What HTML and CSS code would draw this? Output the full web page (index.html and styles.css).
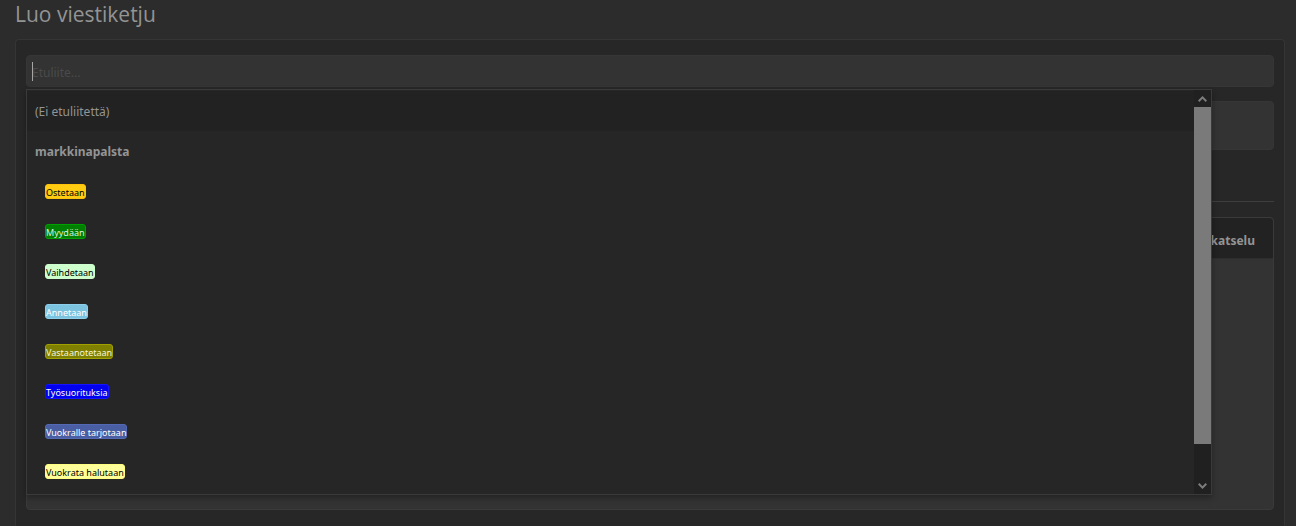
FILE: index.html
```html
<!DOCTYPE html>
<html lang="fi">
<head>
    <meta charset="UTF-8">
    <meta name="viewport" content="width=device-width, initial-scale=1.0">
    <title>Luo viestiketju</title>
    <link rel="stylesheet" href="styles.css">
</head>
<body>
    <h1>Luo viestiketju</h1>

    <form class="block">
        <div class="prefix">
            <input type="text" class="input" id="etuliite" placeholder="Etuliite..." aria-label="Etuliite">
            <span class="caret"></span>

            <!-- Etuliitevalikko -->
            <div class="dropdown">
                <ul class="options" role="listbox" aria-label="Etuliite">
                    <li class="option active" role="option">(Ei etuliitettä)</li>
                    <li class="option group">markkinapalsta</li>
                    <li class="option nested" role="option"><span class="label ostetaan">Ostetaan</span></li>
                    <li class="option nested" role="option"><span class="label myydaan">Myydään</span></li>
                    <li class="option nested" role="option"><span class="label vaihdetaan">Vaihdetaan</span></li>
                    <li class="option nested" role="option"><span class="label annetaan">Annetaan</span></li>
                    <li class="option nested" role="option"><span class="label vastaanotetaan">Vastaanotetaan</span></li>
                    <li class="option nested" role="option"><span class="label tyosuorituksia">Työsuorituksia</span></li>
                    <li class="option nested" role="option"><span class="label vuokralle">Vuokralle tarjotaan</span></li>
                    <li class="option nested" role="option"><span class="label vuokrata">Vuokrata halutaan</span></li>
                </ul>
                <div class="scrollbar">
                    <button type="button" class="arrow" aria-label="Ylös">
                        <svg width="9" height="6" viewBox="0 0 9 6"><path d="M0.7 5.2 4.5 1.4 8.3 5.2"/></svg>
                    </button>
                    <div class="track"><div class="thumb"></div></div>
                    <button type="button" class="arrow" aria-label="Alas">
                        <svg width="9" height="6" viewBox="0 0 9 6"><path d="M0.7 0.8 4.5 4.6 8.3 0.8"/></svg>
                    </button>
                </div>
            </div>
        </div>

        <textarea class="input title" aria-label="Otsikko"></textarea>
        <hr>
        <div class="editor">
            <div class="toolbar">
                <button type="button" class="preview">Esikatselu</button>
            </div>
            <textarea class="message" aria-label="Viesti"></textarea>
        </div>
    </form>
</body>
</html>
```

FILE: styles.css
```css
* {
    box-sizing: border-box;
}

body {
    display: flex;
    flex-direction: column;
    margin: 0;
    padding: 0 11px 0 15px;
    min-height: 100vh;
    background-color: #2c2c2c;
    color: #949494;
    font-family: "Noto Sans", "Open Sans", sans-serif;
    font-size: 12px;
    line-height: 20px;
}

h1 {
    margin: 0 0 11px;
    font-family: "Open Sans", "Noto Sans", sans-serif;
    font-size: 21px;
    font-weight: 400;
    line-height: 28px;
}

.block {
    flex: 1;
    padding: 15px 10px;
    background-color: #272727;
    border: 1px solid #353535;
    border-bottom: 0;
    border-radius: 4px 4px 0 0;
}

.input {
    display: block;
    width: 100%;
    height: 32px;
    padding: 6px 5px 4px;
    background-color: #333;
    border: 1px solid #363636;
    border-radius: 4px;
    color: #949494;
    font: inherit;
    outline: none;
    resize: none;
}

.input::placeholder {
    color: #4a4a4a;
    opacity: 1;
}

.prefix {
    position: relative;
    margin-bottom: 14px;
}

/* tekstikursori */
.caret {
    position: absolute;
    top: 7px;
    left: 6px;
    width: 1px;
    height: 19px;
    background-color: #a5a5a5;
}

.title {
    height: 49px;
}

hr {
    margin: 51px 0 15px;
    border: 0;
    border-top: 1px solid #3e3e3e;
}

.editor {
    background-color: #333;
    border: 1px solid #3a3a3a;
    border-radius: 4px;
}

.toolbar {
    display: flex;
    justify-content: flex-end;
    height: 41px;
    padding: 6px 8px 0;
    background-color: #222;
    border-bottom: 1px solid #2e2e2e;
    border-radius: 4px 4px 0 0;
}

.preview {
    padding: 0 10px;
    background: none;
    border: 0;
    color: #949494;
    font: inherit;
    font-weight: 700;
}

.message {
    display: block;
    width: 100%;
    height: 250px;
    padding: 10px;
    background: none;
    border: 0;
    color: #949494;
    font: inherit;
    outline: none;
    resize: none;
}

.dropdown {
    position: absolute;
    top: 34px;
    left: 0;
    z-index: 10;
    display: flex;
    width: 95%;
    background-color: #262626;
    border: 1px solid #3a3a3a;
    box-shadow: 0 3px 6px rgba(0, 0, 0, 0.3);
}

.options {
    flex: 1;
    margin: 0;
    padding: 1px 0 3px;
    list-style: none;
}

.option {
    height: 40px;
    padding: 11px 8px 9px;
}

.active {
    background-color: #222;
}

.group {
    font-weight: 700;
}

.nested {
    display: flex;
    align-items: center;
    padding: 0 18px;
}

.label {
    height: 15px;
    border: 1px solid transparent;
    border-radius: 3px;
    font-size: 9px;
    line-height: 15px;
}

.ostetaan {
    background-color: #fc1;
    border-color: #ffc20a;
    color: #000;
}

.myydaan {
    background-color: #008000;
    border-color: #00a000;
    color: #dff0df;
}

.vaihdetaan {
    background-color: #cfc;
    border-color: #cfc;
    color: #000;
}

.annetaan {
    background-color: #7cc3e0;
    border-color: #8ccfea;
    color: #fff;
}

.vastaanotetaan {
    background-color: #808000;
    border-color: #a0a000;
    color: #f5f5d8;
}

.tyosuorituksia {
    background-color: #00e;
    border-color: #1414ff;
    color: #fff;
}

.vuokralle {
    background-color: #4a5ea3;
    border-color: #5369b3;
    color: #fff;
}

.vuokrata {
    background-color: #ff9;
    border-color: #ffff80;
    color: #000;
}

.scrollbar {
    display: flex;
    flex-direction: column;
    width: 17px;
    background-color: #202020;
}

.arrow {
    display: flex;
    align-items: center;
    justify-content: center;
    height: 17px;
    padding: 0;
    background: none;
    border: 0;
}

.arrow svg {
    fill: none;
    stroke: #7c7c7c;
    stroke-width: 2;
}

.track {
    flex: 1;
}

.thumb {
    height: 91%;
    background-color: #7a7a7a;
}
```
